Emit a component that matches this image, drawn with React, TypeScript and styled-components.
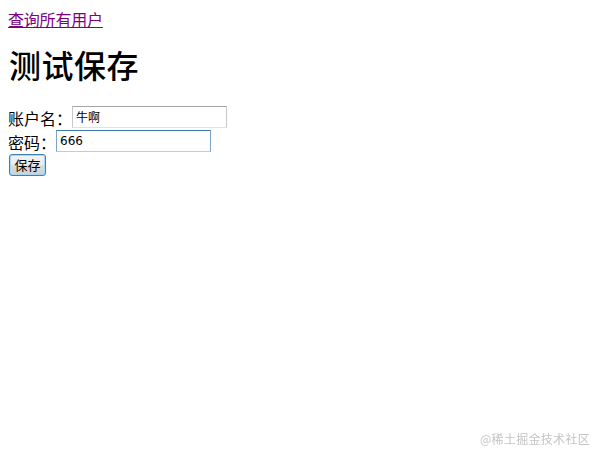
import React from "react";
import styled, { createGlobalStyle } from "styled-components";

const Global = createGlobalStyle`
  html, body { background: #ffffff; }
  body {
    margin: 8px;
    font-family: "Noto Sans CJK SC", "Liberation Serif", serif;
    font-size: 16px;
    color: #000;
  }
`;

const Page = styled.div`
  display: flex;
  flex-direction: column;
  align-items: flex-start;
`;

const NavLink = styled.a`
  color: #800080;
  text-decoration: underline;
  font-size: 16px;
  line-height: 22px;
  letter-spacing: -0.2px;
`;

const Title = styled.h1`
  margin: 16px 0 0 1px;
  font-size: 32px;
  line-height: 36px;
  font-weight: 500;
  letter-spacing: 0.5px;
  font-family: "Noto Sans CJK SC", serif;
`;

const Form = styled.form`
  display: flex;
  flex-direction: column;
  align-items: flex-start;
  margin-top: 23px;
  gap: 1px;
`;

const Row = styled.div`
  display: flex;
  align-items: center;
  height: 23px;
`;

const Label = styled.span`
  font-size: 16px;
  line-height: 22px;
  padding-top: 3px;
`;

const Input = styled.input<{ $focused?: boolean }>`
  box-sizing: border-box;
  width: 155px;
  height: 22px;
  margin: 0;
  padding: 1px 3px;
  font-family: "DejaVu Sans", "Noto Sans CJK SC", sans-serif;
  font-size: 12px;
  color: #000;
  background: #fff;
  outline: none;
  border: 1px solid ${(p) => (p.$focused ? "#7da2ce" : "#c8c8c8")};
  border-top-color: ${(p) => (p.$focused ? "#3d7bad" : "#a5a5a5")};
  border-bottom-color: ${(p) => (p.$focused ? "#b5cfe7" : "#e2e2e2")};
  caret-color: #000;
`;

const Button = styled.button`
  margin: 1px 0 0 1px;
  box-sizing: border-box;
  width: 37px;
  height: 22px;
  padding: 0;
  font-family: "Noto Sans CJK SC", sans-serif;
  font-size: 13px;
  line-height: 18px;
  color: #000;
  border: 1px solid #3c7fb1;
  border-radius: 3px;
  background: linear-gradient(#f2f2f2 0%, #ebebeb 50%, #dddddd 51%, #cfcfcf 100%);
  box-shadow: inset 0 0 0 1px #a7d9f5;
`;

const Watermark = styled.div`
  position: fixed;
  right: 6px;
  bottom: 5px;
  font-family: "Noto Sans CJK SC", sans-serif;
  font-size: 12px;
  color: #c4c4c4;
  letter-spacing: 0.3px;
`;

export default function App() {
  return (
    <>
      <Global />
      <Page>
        <NavLink href="#">查询所有用户</NavLink>
        <Title>测试保存</Title>
        <Form onSubmit={(e) => e.preventDefault()}>
          <Row>
            <Label>账户名：</Label>
            <Input defaultValue="牛啊" />
          </Row>
          <Row>
            <Label>密码：</Label>
            <Input $focused defaultValue="666" />
          </Row>
          <Button type="submit">保存</Button>
        </Form>
      </Page>
      <Watermark>@稀土掘金技术社区</Watermark>
    </>
  );
}
